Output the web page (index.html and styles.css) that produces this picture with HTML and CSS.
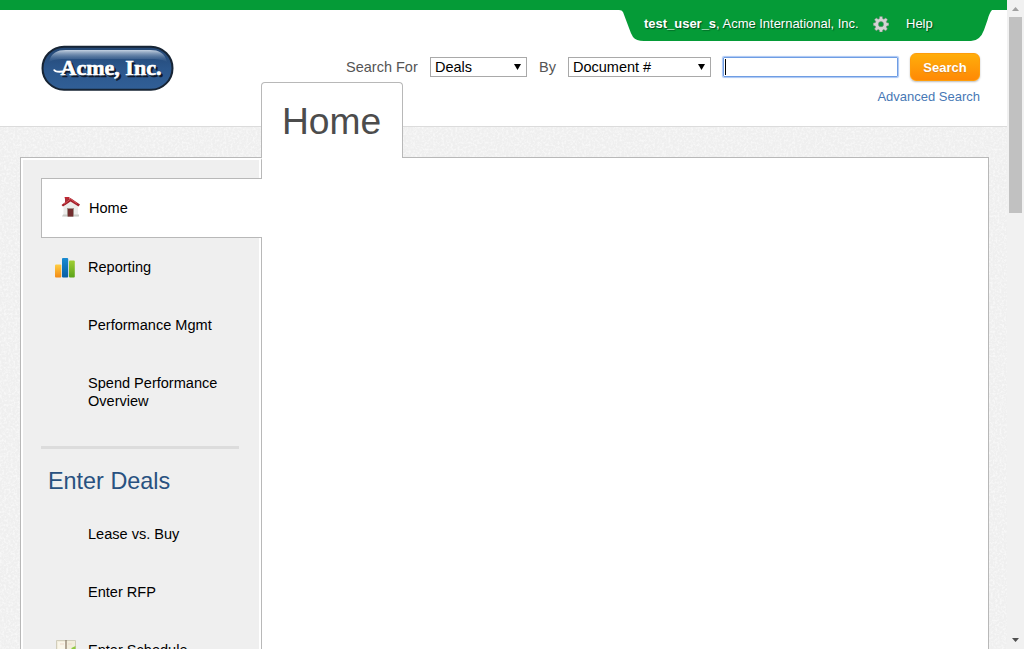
FILE: index.html
```html
<!DOCTYPE html>
<html lang="en">
<head>
<meta charset="utf-8">
<title>Home</title>
<link rel="stylesheet" href="styles.css">
</head>
<body>
<div class="window">
  <div class="page">
    <svg class="texture" width="1007" height="649" aria-hidden="true">
      <filter id="grain" x="0" y="0" width="100%" height="100%">
        <feTurbulence type="fractalNoise" baseFrequency="0.45" numOctaves="2" seed="4"/>
        <feColorMatrix values="0 0 0 0 1  0 0 0 0 1  0 0 0 0 1  3 0 0 0 -1.25"/>
      </filter>
      <rect width="1007" height="649" filter="url(#grain)"/>
    </svg>
    <header class="header">
      <div class="logo">
        <svg width="134" height="46" viewBox="0 0 134 46" role="img" aria-label="Acme, Inc.">
          <defs>
            <linearGradient id="pill" x1="0" y1="0" x2="0" y2="1">
              <stop offset="0" stop-color="#234673"/><stop offset=".5" stop-color="#2b568b"/><stop offset="1" stop-color="#315f96"/>
            </linearGradient>
            <linearGradient id="shine" x1="0" y1="0" x2="0" y2="1">
              <stop offset="0" stop-color="#c5d2e2"/><stop offset="1" stop-color="#3b6292" stop-opacity=".2"/>
            </linearGradient>
          </defs>
          <rect x="1.5" y="1.7" width="130" height="43" rx="21.5" fill="url(#pill)" stroke="#172434" stroke-width="2"/>
          <path d="M8 17C10 8 16 5 25 5H109C118 5 124 8 126 17C121 14 115 14 109 14H25C19 14 13 14 8 17Z" fill="url(#shine)"/>
          <path d="M13 24.500c1 3 6 3 15 1" stroke="#fff" stroke-width="2" fill="none"/>
          <text class="logo-shadow" x="21.500" y="32" textLength="101" lengthAdjust="spacingAndGlyphs">Acme, Inc.</text>
          <text class="logo-text" x="19.500" y="30" textLength="101" lengthAdjust="spacingAndGlyphs">Acme, Inc.</text>
        </svg>
      </div>
      <div class="tools">
        <div class="userbar">
          <svg class="userbar-shape" width="374" height="31" viewBox="0 0 374 31" aria-hidden="true"><path d="M0 0H373C371 2 370 5 368.500 10L365 20Q361 31 352 31H25Q17 31 14 27Q12 24 10 18L4 2Q3 0 0 0Z" fill="#059b37"/></svg>
          <span class="user"><b>test_user_s</b>, Acme International, Inc.</span>
          <svg class="gear" width="16" height="16" viewBox="0 0 16 16" aria-hidden="true">
            <path d="M6.700 .5h2.600l.4 2.200 1.200.5 1.900-1.300 1.700 1.800-1.200 1.900.4 1.100 2.100.4v2.400l-2.100.5-.5 1.100 1.200 1.900-1.700 1.700-1.900-1.200-1.100.5-.4 2.100H6.700l-.4-2.100-1.200-.5-1.800 1.200-1.800-1.700 1.300-1.900-.5-1.100-2-.5V7.100l2-.4.5-1.100-1.300-1.900 1.800-1.800 1.800 1.300 1.200-.5zM8 5.600a2.600 2.600 0 1 0 0 5.200 2.600 2.600 0 0 0 0-5.200z" fill="#d4d4d4" stroke="#7f8981" stroke-width=".5" fill-rule="evenodd"/>
          </svg>
          <a class="help">Help</a>
        </div>
        <form class="search">
          <label class="label label-for">Search For</label>
          <div class="select select-for">Deals<svg width="7" height="6" viewBox="0 0 7 6"><path d="M0 0H7L3.500 6Z"/></svg></div>
          <label class="label label-by">By</label>
          <div class="select select-by">Document #<svg width="7" height="6" viewBox="0 0 7 6"><path d="M0 0H7L3.500 6Z"/></svg></div>
          <div class="field"><span class="caret"></span></div>
          <button class="submit" type="button">Search</button>
        </form>
        <a class="advanced">Advanced Search</a>
      </div>
    </header>
    <main class="panel">
      <h1 class="tab">Home</h1>
      <nav class="sidebar">
        <a class="item active">
          <svg width="20" height="21" viewBox="0 0 20 21" aria-hidden="true">
            <path d="M2.500 9L9.500 4L17 9V19.500H2.500Z" fill="#ececea"/><path d="M2 17.500H18V19.500H1Z" fill="#c9cbc7"/>
            <path d="M4 1h4v4l-4 3z" fill="#a93239"/><path d="M3.500 0h5v2H4z" fill="#bd2833"/>
            <path d="M.5 8L9.500 1L19 7.500L17.500 9.500L9.500 4.500L2 9.500Z" fill="#a3212b"/><path d="M3 7L9.500 2L16 6.500" stroke="#d5525b" fill="none"/>
            <path d="M6 11h7v8.500H6z" fill="#a09089"/><path d="M7 12h5v7.500H7z" fill="#722d2e"/>
          </svg>
          <span>Home</span>
        </a>
        <a class="item reporting">
          <svg width="20" height="20" viewBox="0 0 20 20" aria-hidden="true">
            <defs>
              <linearGradient id="orange" x1="0" y1="0" x2="0" y2="1"><stop stop-color="#ffce42"/><stop offset="1" stop-color="#f28a16"/></linearGradient>
              <linearGradient id="blue" x1="0" y1="0" x2="0" y2="1"><stop stop-color="#198bd1"/><stop offset="1" stop-color="#075da4"/></linearGradient>
              <linearGradient id="green" x1="0" y1="0" x2="0" y2="1"><stop stop-color="#a0ce32"/><stop offset="1" stop-color="#5ba319"/></linearGradient>
            </defs>
            <rect x="0" y="6.500" width="6.300" height="13" rx="1" fill="url(#orange)"/><rect x="7" y="0" width="6.200" height="19.500" rx="1" fill="url(#blue)"/><rect x="14" y="2.500" width="5.800" height="17" rx="1" fill="url(#green)"/>
          </svg>
          <span>Reporting</span>
        </a>
        <a class="item"><span>Performance Mgmt</span></a>
        <a class="item tall"><span>Spend Performance<br>Overview</span></a>
        <hr class="rule">
        <h2 class="group">Enter Deals</h2>
        <a class="item"><span>Lease vs. Buy</span></a>
        <a class="item"><span>Enter RFP</span></a>
        <a class="item schedule">
          <svg width="20" height="18" viewBox="0 0 20 18" aria-hidden="true"><path d="M.5.5H19.500V17.500H.5Z" fill="#f2eddb" stroke="#d1cdbb"/><path d="M2 2H9V16H2Z" fill="#faf6e9"/><path d="M10 0V18" stroke="#887766" stroke-width="1.200"/><path d="M4 4H8M12 4H16" stroke="#eedacb"/><path d="M15.500 8l4-2v10h-4z" fill="#8fca3f"/></svg>
          <span>Enter Schedule</span>
        </a>
      </nav>
      <section class="content"></section>
    </main>
  </div>
  <div class="scrollbar">
    <svg width="7" height="4" viewBox="0 0 7 4"><path d="M0 4L3.500 0L7 4Z" fill="#a0a0a0"/></svg>
    <div class="thumb"></div>
    <svg class="down" width="7" height="4" viewBox="0 0 7 4"><path d="M0 0H7L3.500 4Z" fill="#505050"/></svg>
  </div>
</div>
</body>
</html>
```
FILE: styles.css
```css
* { box-sizing: border-box; }
body { margin: 0; overflow: hidden; font-family: "Liberation Sans", Arial, sans-serif; color: #000; }
.window { display: flex; height: 649px; overflow: hidden; }
.page { position: relative; width: 1007px; height: 649px; overflow: hidden; background: #efefef; display: flex; flex-direction: column; }
.texture { position: absolute; inset: 0; opacity: .5; }
.header { position: relative; z-index: 0; height: 127px; flex: none; display: flex; justify-content: space-between; background: #fff; border-top: 10px solid #059b37; border-bottom: 1px solid #dcdcdc; }
.logo { padding: 35px 0 0 41px; }
.logo svg { display: block; }
.logo-text, .logo-shadow { font: bold 22px "Liberation Serif", serif; fill: #fff; stroke: #fff; stroke-width: .6px; }
.logo-shadow { fill: #10192a; stroke: #10192a; }
.tools { width: 661px; display: flex; flex-direction: column; }
.userbar { position: relative; z-index: 0; width: 374px; height: 31px; margin-left: 273px; display: flex; align-items: center; padding: 0 0 4px 25px; color: #fff; font-size: 13px; text-shadow: 1px 1px 1px #004d1c; }
.userbar-shape { position: absolute; left: 0; top: 0; z-index: -1; }
.user { width: 229px; white-space: nowrap; letter-spacing: -.02px; }
.gear { display: block; }
.help { margin-left: 17px; }
.search { display: flex; align-items: center; height: 28px; margin-top: 12px; }
.label { font-size: 14.500px; line-height: 18px; color: #555; padding-bottom: 1px; }
.label-for { width: 84px; }
.label-by { width: 29px; }
.select { height: 20px; border: 1px solid #a9a9a9; background: #fff; padding: 0 5px 0 4px; display: flex; align-items: center; justify-content: space-between; font-size: 14.500px; }
.select svg { margin-bottom: 1px; }
.select-for { width: 97px; margin-right: 12px; }
.select-by { width: 143px; margin-right: 12px; }
.field { width: 175px; height: 20px; border: 1px solid #6f9de3; box-shadow: 0 0 1px 1px #a8c5f4; padding: 1px; margin-right: 12px; border-radius: 1px; }
.caret { display: block; width: 1px; height: 16px; background: #000; }
.submit { width: 70px; height: 28px; padding: 0; border: 1px solid #ff9d0b; border-radius: 6px; background: linear-gradient(#ffae0b, #ff8905); color: #fff; font: bold 13px "Liberation Sans", Arial, sans-serif; box-shadow: 0 1px 2px #bbb; text-shadow: 0 1px 1px #d98220; }
.advanced { align-self: flex-end; margin: 8px 27px 0 0; font-size: 13px; line-height: 16px; color: #4778b5; }
.panel { position: relative; flex: none; display: flex; width: 969px; height: 600px; margin: 30px 0 0 20px; border: 1px solid #b8b8b8; background: #fff; }
.tab { position: absolute; left: 240px; top: -76px; width: 142px; height: 76px; margin: 0; padding: 16px 0 0 20px; border: 1px solid #b8b8b8; border-bottom: 0; border-radius: 4px 4px 0 0; background: #fff; font-size: 37.200px; line-height: 44px; font-weight: 400; color: #4c4c4c; }
.sidebar { width: 241px; border: 2px solid #fff; border-right: 1px solid #b8b8b8; background: #efefef; box-shadow: inset -2px 0 #fff; padding: 18px 0 0 18px; }
.item { display: flex; height: 58px; padding: 20px 0 0 47px; font-size: 14.550px; line-height: 18px; }
.item svg { flex: none; }
.item.active { position: relative; width: 221px; height: 60px; padding: 18px 0 0 19px; border: 1px solid #b8b8b8; border-right: 0; background: #fff; }
.active span { margin: 2px 0 0 8px; }
.reporting, .schedule { padding-left: 14px; }
.reporting span, .schedule span { margin-left: 13px; }
.schedule { padding-left: 15px; }
.schedule svg { margin-top: -1px; }
.schedule span { margin-left: 12px; }
.item.tall { height: 92px; }
.rule { width: 198px; height: 3px; margin: 0; border: 0; background: #dcdcdc; }
.group { margin: 0; padding: 17px 0 0 7px; height: 56px; font-size: 23.400px; line-height: 30px; font-weight: 400; color: #285180; }
.content { flex: 1; }
.scrollbar { width: 17px; height: 649px; display: flex; flex-direction: column; align-items: center; background: #f1f1f1; padding: 7px 0; }
.scrollbar svg { display: block; flex: none; }
.thumb { width: 13px; height: 196px; margin-top: 6px; background: #c1c1c1; }
.down { margin-top: auto; }
```
